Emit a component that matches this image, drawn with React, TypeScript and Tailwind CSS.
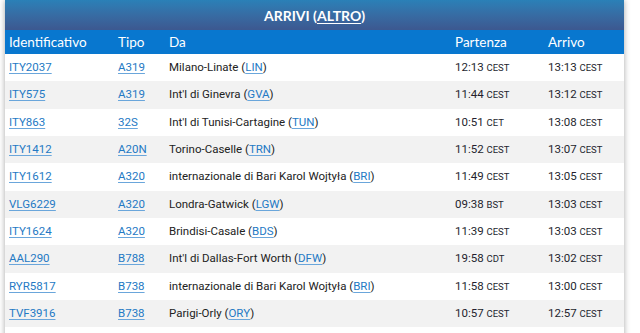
import React from "react";

type Row = {
  id: string;
  tipo: string;
  da: string;
  code: string;
  dep: string;
  depTz: string;
  arr: string;
  arrTz: string;
};

const rows: Row[] = [
  { id: "ITY2037", tipo: "A319", da: "Milano-Linate", code: "LIN", dep: "12:13", depTz: "CEST", arr: "13:13", arrTz: "CEST" },
  { id: "ITY575", tipo: "A319", da: "Int'l di Ginevra", code: "GVA", dep: "11:44", depTz: "CEST", arr: "13:12", arrTz: "CEST" },
  { id: "ITY863", tipo: "32S", da: "Int'l di Tunisi-Cartagine", code: "TUN", dep: "10:51", depTz: "CET", arr: "13:08", arrTz: "CEST" },
  { id: "ITY1412", tipo: "A20N", da: "Torino-Caselle", code: "TRN", dep: "11:52", depTz: "CEST", arr: "13:07", arrTz: "CEST" },
  { id: "ITY1612", tipo: "A320", da: "internazionale di Bari Karol Wojtyła", code: "BRI", dep: "11:49", depTz: "CEST", arr: "13:05", arrTz: "CEST" },
  { id: "VLG6229", tipo: "A320", da: "Londra-Gatwick", code: "LGW", dep: "09:38", depTz: "BST", arr: "13:03", arrTz: "CEST" },
  { id: "ITY1624", tipo: "A320", da: "Brindisi-Casale", code: "BDS", dep: "11:39", depTz: "CEST", arr: "13:03", arrTz: "CEST" },
  { id: "AAL290", tipo: "B788", da: "Int'l di Dallas-Fort Worth", code: "DFW", dep: "19:58", depTz: "CDT", arr: "13:02", arrTz: "CEST" },
  { id: "RYR5817", tipo: "B738", da: "internazionale di Bari Karol Wojtyła", code: "BRI", dep: "11:58", depTz: "CEST", arr: "13:00", arrTz: "CEST" },
  { id: "TVF3916", tipo: "B738", da: "Parigi-Orly", code: "ORY", dep: "10:57", depTz: "CEST", arr: "12:57", arrTz: "CEST" },
];

const cols = "grid grid-cols-[109px_51px_286px_93px_1fr] px-[4px] items-center";

function Link({ children }: { children: React.ReactNode }) {
  return (
    <a href="#" className="text-[#2479c4] underline decoration-[#6aa6db] underline-offset-[2px]">
      {children}
    </a>
  );
}

function Time({ t, tz }: { t: string; tz: string }) {
  return (
    <span className="text-[#241f2e]">
      {t} <span className="text-[9.5px]">{tz}</span>
    </span>
  );
}

export default function App() {
  return (
    <div className="w-[640px] h-[333px] bg-white overflow-hidden pl-[5px]">
      <div className="w-[619px] h-[340px] bg-white shadow-[0_0_6px_rgba(0,0,0,0.35)]">
        <div
          className="h-[30px] flex items-center justify-center bg-gradient-to-b from-[#2a80b7] to-[#3c5890] text-white font-bold text-[14px]"
          style={{ fontFamily: "Lato, 'Open Sans', sans-serif" }}
        >
          ARRIVI (<span className="underline underline-offset-[2px]">ALTRO</span>)
        </div>
        <div
          className={`${cols} h-[24px] bg-[#0877cf] text-white text-[13.5px]`}
          style={{ fontFamily: "Lato, 'Open Sans', sans-serif" }}
        >
          <div>Identificativo</div>
          <div>Tipo</div>
          <div>Da</div>
          <div>Partenza</div>
          <div>Arrivo</div>
        </div>
        <div style={{ fontFamily: "Roboto, 'Liberation Sans', sans-serif" }} className="text-[11.5px] text-[#222]">
          {rows.map((r, i) => (
            <div
              key={i}
              className={`${cols} h-[27.33px] ${i % 2 === 1 ? "bg-[#f2f2f2]" : "bg-white"}`}
            >
              <div>
                <Link>{r.id}</Link>
              </div>
              <div>
                <Link>{r.tipo}</Link>
              </div>
              <div className="whitespace-nowrap">
                {r.da} (<Link>{r.code}</Link>)
              </div>
              <div>
                <Time t={r.dep} tz={r.depTz} />
              </div>
              <div>
                <Time t={r.arr} tz={r.arrTz} />
              </div>
            </div>
          ))}
        </div>
      </div>
    </div>
  );
}
